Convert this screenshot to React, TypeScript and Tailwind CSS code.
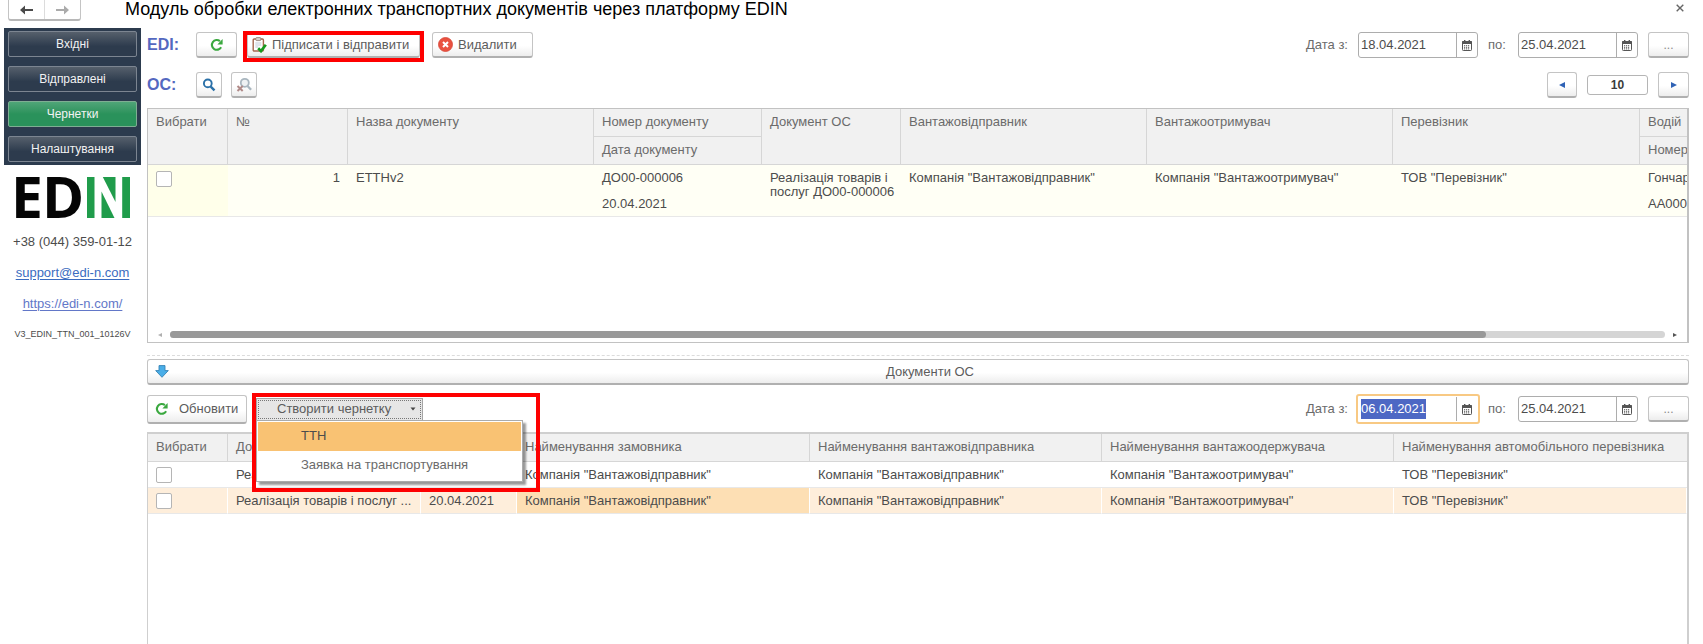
import { useEffect, useRef } from "react";
import type { ReactNode, Ref } from "react";

const raised =
  "flex shrink-0 items-center whitespace-nowrap rounded-[3px] border border-[#c4c4c4] border-b-2 border-b-[#b0b0b0] bg-gradient-to-b from-white from-55% to-[#ededed] text-[#5c5c5c]";

function RefreshIcon() {
  return (
    <svg width="14" height="14" viewBox="0 0 14 14" aria-hidden="true">
      <path d="M11.1 9.2A4.9 4.9 0 1 1 9.9 3.1" fill="none" stroke="#3aa83f" strokeWidth="2.1" />
      <path d="M12.6 1v5.4H7.4z" fill="#3aa83f" />
    </svg>
  );
}

function ClipboardIcon() {
  return (
    <svg width="15" height="16" viewBox="0 0 15 16" aria-hidden="true">
      <rect x="1.2" y="2" width="10.2" height="12" rx="1" fill="#fff" stroke="#a5664d" strokeWidth="1.4" />
      <rect x="3.8" y="0.6" width="5" height="3" rx="0.8" fill="#d9d2cc" stroke="#8c7a70" strokeWidth="0.8" />
      <path d="M3.3 6h6M3.3 8h6M3.3 10h3" stroke="#b9c3d0" strokeWidth="0.9" />
      <path d="M6.2 11.2l2.8 2.9 4.8-6.3" fill="none" stroke="#169a1f" strokeWidth="2.7" />
    </svg>
  );
}

function DeleteIcon() {
  return (
    <svg width="15" height="15" viewBox="0 0 15 15" aria-hidden="true">
      <circle cx="7.5" cy="7.5" r="7" fill="#e9513f" stroke="#d7473a" strokeWidth="0.8" />
      <path d="M5 5l5 5M10 5l-5 5" stroke="#fff" strokeWidth="2" />
    </svg>
  );
}

function SearchIcon() {
  return (
    <svg width="14" height="14" viewBox="0 0 14 14" aria-hidden="true">
      <circle cx="5.8" cy="5.4" r="3.9" fill="#fff" stroke="#2a70a8" strokeWidth="1.9" />
      <path d="M8.7 8.6l3.8 3.8" stroke="#2a70a8" strokeWidth="2.4" />
    </svg>
  );
}

function SearchClearIcon() {
  return (
    <svg width="16" height="16" viewBox="0 0 16 16" aria-hidden="true">
      <circle cx="8.8" cy="5.8" r="4" fill="#eef1f3" stroke="#a9b6bf" strokeWidth="1.8" />
      <path d="M11.5 9l3.6 3.8" stroke="#a9b6bf" strokeWidth="2.3" />
      <path d="M1.5 9l5.2 5M6.7 9l-5.2 5" stroke="#b08a88" strokeWidth="2" />
    </svg>
  );
}

function CalendarIcon() {
  return (
    <svg width="10" height="11" viewBox="0 0 10 11" aria-hidden="true">
      <rect x="0.5" y="1.5" width="9" height="9" rx="0.8" fill="#fff" stroke="#555" />
      <rect x="0" y="1" width="10" height="3" rx="0.8" fill="#555" />
      <path d="M2.7 0v2.5M7.3 0v2.5" stroke="#555" strokeWidth="1.4" />
      <path d="M2 5.7h6M2 7.3h6M2 8.9h6" stroke="#555" strokeWidth="1" strokeDasharray="1.2 0.8" />
    </svg>
  );
}

function Triangle({ d, className }: { d: string; className: string }) {
  return (
    <svg width="6" height="6" viewBox="0 0 6 6" className={className} aria-hidden="true">
      <path d={d} />
    </svg>
  );
}

function NavArrow({ flip, color }: { flip?: boolean; color: string }) {
  return (
    <svg width="13" height="10" viewBox="0 0 13 10" className={flip ? "-scale-x-100" : ""} aria-hidden="true">
      <path d="M0 5L5 0.6V4H13V6H5V9.4z" fill={color} />
    </svg>
  );
}

function Logo() {
  return (
    <svg width="118" height="44" viewBox="0 0 118 44" className="overflow-visible" role="img" aria-label="EDIN">
      <g fill="#050505" fontFamily="'Open Sans', 'Noto Sans', sans-serif" fontWeight="700" fontSize="57">
        <text x="-3" y="42">E</text>
        <text x="28" y="42">D</text>
      </g>
      <g fill="#209c4b">
        <rect x="73" y="1" width="7.5" height="41" />
        <path d="M88.8 1h12.700v25z" />
        <path d="M87.500 15.500v26.500h13z" />
        <rect x="108.200" y="1" width="7.800" height="41" />
      </g>
    </svg>
  );
}

function DateField({
  id,
  label,
  value,
  active,
  inputRef,
}: {
  id: string;
  label: string;
  value: string;
  active?: boolean;
  inputRef?: Ref<HTMLInputElement>;
}) {
  return (
    <div className="flex items-center">
      <label htmlFor={id} className="mr-[10px] min-w-5 whitespace-nowrap text-[#6b6b6b]">
        {label}
      </label>
      <div
        className={
          active
            ? "flex h-[26px] w-[120px] rounded-[1px] border border-white outline-2 outline-[#f8c983]"
            : "flex h-[26px] w-[120px] rounded-[3px] border border-[#adadad]"
        }
      >
        <input
          id={id}
          ref={inputRef}
          type="text"
          defaultValue={value}
          className="w-0 flex-1 pl-[2px] text-[13px] text-[#4c4c4c] outline-none selection:bg-[#4d68c4] selection:text-white"
        />
        <button
          type="button"
          aria-label="Календар"
          className="flex w-[21px] items-center justify-center border-l border-[#adadad]"
        >
          <CalendarIcon />
        </button>
      </div>
    </div>
  );
}

function DateRange({
  prefix,
  from,
  to,
  active,
  inputRef,
}: {
  prefix: string;
  from: string;
  to: string;
  active?: boolean;
  inputRef?: Ref<HTMLInputElement>;
}) {
  return (
    <div className="ml-auto flex items-center gap-[10px]">
      <DateField id={prefix + "-from"} label="Дата з:" value={from} active={active} inputRef={inputRef} />
      <DateField id={prefix + "-to"} label="по:" value={to} />
      <button type="button" className={raised + " h-[26px] w-[41px] justify-center"}>
        <span className="text-xs text-[#8a8a8a]">...</span>
      </button>
    </div>
  );
}

function Check({ label }: { label: string }) {
  return (
    <input
      type="checkbox"
      aria-label={label}
      className="block size-4 appearance-none rounded-[2px] border border-[#b5b5b5] bg-white"
    />
  );
}

function Th({ children, rowSpan }: { children: ReactNode; rowSpan?: number }) {
  return (
    <th
      rowSpan={rowSpan}
      className="overflow-hidden border-r border-b border-[#d6d6d6] px-2 pt-[5px] text-left align-top leading-4 font-normal whitespace-nowrap text-[#6b6b6b] last:border-r-0"
    >
      {children}
    </th>
  );
}

const sections = ["Вхідні", "Відправлені", "Чернетки", "Налаштування"];

const sourceDocs = [
  { name: "Реалізація товарів і послуг ...", date: "20.04.2021", selected: false },
  { name: "Реалізація товарів і послуг ...", date: "20.04.2021", selected: true },
];

export default function App() {
  const fromRef = useRef<HTMLInputElement>(null);
  useEffect(() => {
    fromRef.current?.focus();
    fromRef.current?.select();
  }, []);

  return (
    <div className="flex h-screen flex-col overflow-hidden bg-white font-['Liberation_Sans',Arial,sans-serif] text-[13px] text-[#4c4c4c]">
      <header className="flex h-7 shrink-0 items-start pr-[19px] pl-2">
        <div className="flex h-[21px] w-[73px] rounded-b-[3px] border border-t-0 border-b-2 border-[#c4c4c4] border-b-[#b8b8b8]">
          <button type="button" aria-label="Назад" className="flex flex-1 items-center justify-center border-r border-[#dcdcdc]">
            <NavArrow color="#4a4a4a" />
          </button>
          <button type="button" aria-label="Вперед" className="flex flex-1 items-center justify-center">
            <NavArrow flip color="#ababab" />
          </button>
        </div>
        <h1 className="ml-11 text-lg leading-[18px] whitespace-nowrap text-black">
          Модуль обробки електронних транспортних документів через платформу EDIN
        </h1>
        <button type="button" aria-label="Закрити" className="mt-1 ml-auto p-0">
          <svg width="8" height="8" viewBox="0 0 8 8" aria-hidden="true">
            <path d="M0.700 0.700l6.600 6.600M7.300 0.700l-6.600 6.600" stroke="#666" strokeWidth="1.400" />
          </svg>
        </button>
      </header>

      <div className="flex min-h-0 flex-1 pr-[14px] pl-1">
        <aside className="flex w-[137px] shrink-0 flex-col items-center">
          <nav className="flex w-full flex-col gap-[9px] bg-[#2c3b4e] px-1 py-[3px]">
            {sections.map((s) => (
              <button
                key={s}
                type="button"
                className={
                  s === "Чернетки"
                    ? "h-[26px] rounded-[2px] border border-[#7fae93] bg-gradient-to-b from-[#4fa578] to-[#2a925b] to-50% text-xs text-[#f2f2f2]"
                    : "h-[26px] rounded-[2px] border border-[#7c8591] bg-gradient-to-b from-[#56606c] to-[#2d3b4d] to-60% text-xs text-[#f2f2f2]"
                }
              >
                {s}
              </button>
            ))}
          </nav>
          <div className="mt-[11px]">
            <Logo />
          </div>
          <p className="mt-[14px] leading-4">+38 (044) 359-01-12</p>
          <a href="mailto:support@edi-n.com" className="mt-[15px] leading-4 text-[#3b6cc0] underline underline-offset-2">
            support@edi-n.com
          </a>
          <a href="https://edi-n.com/" className="mt-[15px] leading-4 text-[#6277c8] underline underline-offset-2">
            https://edi-n.com/
          </a>
          <p className="mt-4 text-[9px] leading-3">V3_EDIN_TTN_001_10126V</p>
        </aside>

        <main className="ml-[6px] flex min-w-0 flex-1 flex-col">
          <div className="mt-1 flex h-[26px] shrink-0 items-center">
            <span className="w-[49px] text-base font-bold text-[#5468c0]">EDI:</span>
            <button type="button" aria-label="Оновити" className={raised + " h-[26px] w-[41px] justify-center"}>
              <RefreshIcon />
            </button>
            <div className="relative ml-[10px]">
              <button type="button" className={raised + " h-[26px] w-[173px] gap-[5px] pl-1"}>
                <ClipboardIcon />
                Підписати і відправити
              </button>
              <div className="pointer-events-none absolute -top-px -left-1 h-[31px] w-[181px] border-4 border-[#fe0000]" />
            </div>
            <button type="button" className={raised + " ml-[12px] h-[26px] w-[101px] gap-[5px] pl-[5px]"}>
              <DeleteIcon />
              Видалити
            </button>
            <DateRange prefix="inbox" from="18.04.2021" to="25.04.2021" />
          </div>

          <div className="mt-[14px] flex h-[26px] shrink-0 items-center">
            <span className="w-[49px] text-base font-bold text-[#5468c0]">ОС:</span>
            <button type="button" aria-label="Знайти" className={raised + " h-[26px] w-[26px] justify-center"}>
              <SearchIcon />
            </button>
            <button type="button" aria-label="Скасувати пошук" className={raised + " ml-[9px] h-[26px] w-[26px] justify-center"}>
              <SearchClearIcon />
            </button>
            <div className="ml-auto flex items-center gap-[10px]">
              <button type="button" aria-label="Попередня" className={raised + " h-[26px] w-[30px] justify-center"}>
                <Triangle d="M6 0v6L0 3z" className="fill-[#2f62b5]" />
              </button>
              <input
                type="text"
                aria-label="Кількість"
                defaultValue="10"
                className="h-5 w-[61px] rounded-[3px] border border-[#b5b5b5] text-center text-xs font-bold text-[#3c3c3c]"
              />
              <button type="button" aria-label="Наступна" className={raised + " h-[26px] w-[31px] justify-center"}>
                <Triangle d="M0 0v6l6-3z" className="fill-[#2f62b5]" />
              </button>
            </div>
          </div>

          <section className="mt-[10px] flex h-[235px] shrink-0 flex-col overflow-hidden border border-r-2 border-[#c2c2c2]">
            <table className="w-full table-fixed border-separate border-spacing-0">
              <colgroup>
                <col className="w-20" />
                <col className="w-[120px]" />
                <col className="w-[246px]" />
                <col className="w-[168px]" />
                <col className="w-[139px]" />
                <col className="w-[246px]" />
                <col className="w-[246px]" />
                <col className="w-[247px]" />
                <col />
              </colgroup>
              <thead className="bg-[#f1f1f1]">
                <tr className="h-7">
                  <Th rowSpan={2}>Вибрати</Th>
                  <Th rowSpan={2}>№</Th>
                  <Th rowSpan={2}>Назва документу</Th>
                  <Th>Номер документу</Th>
                  <Th rowSpan={2}>Документ ОС</Th>
                  <Th rowSpan={2}>Вантажовідправник</Th>
                  <Th rowSpan={2}>Вантажоотримувач</Th>
                  <Th rowSpan={2}>Перевізник</Th>
                  <Th>Водій</Th>
                </tr>
                <tr className="h-7">
                  <Th>Дата документу</Th>
                  <Th>Номер</Th>
                </tr>
              </thead>
              <tbody className="bg-[#fffff5] leading-[14px] [&_td]:pt-[6px] [&_td]:pl-2 [&_td]:align-top">
                <tr className="h-[26px]">
                  <td rowSpan={2} className="border-b border-[#e8e8e8] bg-[#ffffea]">
                    <Check label="Вибрати ЕТТНv2" />
                  </td>
                  <td rowSpan={2} className="border-b border-[#e8e8e8] pr-2 text-right">1</td>
                  <td rowSpan={2} className="border-b border-[#e8e8e8]">ЕТТНv2</td>
                  <td>ДО00-000006</td>
                  <td rowSpan={2} className="border-b border-[#e8e8e8]">
                    Реалізація товарів і послуг ДО00-000006
                  </td>
                  <td rowSpan={2} className="border-b border-[#e8e8e8]">Компанія "Вантажовідправник"</td>
                  <td rowSpan={2} className="border-b border-[#e8e8e8]">Компанія "Вантажоотримувач"</td>
                  <td rowSpan={2} className="border-b border-[#e8e8e8]">ТОВ "Перевізник"</td>
                  <td>Гончар</td>
                </tr>
                <tr className="h-[26px]">
                  <td className="border-b border-[#e8e8e8]">20.04.2021</td>
                  <td className="border-b border-[#e8e8e8]">АА000</td>
                </tr>
              </tbody>
            </table>
            <div className="mt-auto flex h-[15px] items-center px-[9px]">
              <Triangle d="M5 1v4L1 3z" className="fill-[#b0b0b0]" />
              <div className="mx-[7px] flex h-[7px] flex-1 rounded-full bg-[#d5d5d5]">
                <div className="w-[88%] rounded-full bg-[#999]" />
              </div>
              <Triangle d="M1 1v4l4-2z" className="fill-[#555]" />
            </div>
          </section>

          <div className="mt-3 h-px shrink-0 border-t border-dashed border-[#dcdcdc]" />

          <button type="button" className={raised + " relative mt-[3px] h-[26px] w-full justify-center pl-6"}>
            <svg width="14" height="13" viewBox="0 0 14 13" className="absolute left-[7px]" aria-hidden="true">
              <path d="M4 0.600h6v5h3.300L7 12.300 0.700 5.600H4z" fill="#4aaee8" stroke="#3583b5" strokeWidth="0.900" />
            </svg>
            Документи ОС
          </button>

          <div className="mt-[9px] flex h-[30px] shrink-0 items-center">
            <button type="button" className={raised + " h-[29px] w-[100px] gap-[10px] pl-[7px]"}>
              <RefreshIcon />
              Обновити
            </button>
            <div className="relative z-10 ml-[9px]">
              <button
                type="button"
                aria-haspopup="menu"
                aria-expanded="true"
                className="flex h-[23px] w-[167px] items-center border border-[#a5a5a5] bg-[#e6e6e6] p-px text-[#5c5c5c]"
              >
                <span className="flex h-full flex-1 items-center justify-between border border-dotted border-[#777] pr-1 pl-[18px]">
                  Створити чернетку
                  <Triangle d="M0.500 1.500h5L3 4.500z" className="fill-[#444]" />
                </span>
              </button>
              <div
                role="menu"
                className="absolute top-[22px] left-0 w-[267px] border border-[#ababab] bg-white p-px shadow-[3px_3px_2px_rgba(0,0,0,0.4)]"
              >
                <button type="button" role="menuitem" className="block h-[29px] w-full bg-[#f9c273] pl-[43px] text-left">
                  ТТН
                </button>
                <button type="button" role="menuitem" className="block h-[29px] w-full pl-[43px] text-left text-[#6b6b6b]">
                  Заявка на транспортування
                </button>
              </div>
              <div className="pointer-events-none absolute -top-[5px] -left-1 h-[99px] w-[288px] border-4 border-[#fe0000]" />
            </div>
            <DateRange prefix="source" from="06.04.2021" to="25.04.2021" active inputRef={fromRef} />
          </div>

          <section className="mt-2 min-h-0 flex-1 overflow-hidden border border-t-2 border-r-2 border-b-0 border-[#cfcfcf]">
            <table className="w-full table-fixed border-separate border-spacing-0">
              <colgroup>
                <col className="w-20" />
                <col className="w-[193px]" />
                <col className="w-24" />
                <col className="w-[293px]" />
                <col className="w-[292px]" />
                <col className="w-[292px]" />
                <col />
              </colgroup>
              <thead className="bg-[#f1f1f1]">
                <tr className="h-7">
                  <Th>Вибрати</Th>
                  <Th>Документ</Th>
                  <Th>Дата</Th>
                  <Th>Найменування замовника</Th>
                  <Th>Найменування вантажовідправника</Th>
                  <Th>Найменування вантажоодержувача</Th>
                  <Th>Найменування автомобільного перевізника</Th>
                </tr>
              </thead>
              <tbody className="leading-4 whitespace-nowrap [&_td]:border-b [&_td]:border-b-[#e8e8e8] [&_td]:px-2">
                {sourceDocs.map((d, i) => (
                  <tr key={i} className={d.selected ? "h-[26px] bg-[#feeedb] [&_td]:border-r [&_td]:border-r-white" : "h-[26px]"}>
                    <td>
                      <Check label={"Вибрати рядок " + (i + 1)} />
                    </td>
                    <td>{d.name}</td>
                    <td>{d.date}</td>
                    <td className={d.selected ? "bg-[#fddfb4]" : ""}>Компанія "Вантажовідправник"</td>
                    <td>Компанія "Вантажовідправник"</td>
                    <td>Компанія "Вантажоотримувач"</td>
                    <td>ТОВ "Перевізник"</td>
                  </tr>
                ))}
              </tbody>
            </table>
          </section>
        </main>
      </div>
    </div>
  );
}
